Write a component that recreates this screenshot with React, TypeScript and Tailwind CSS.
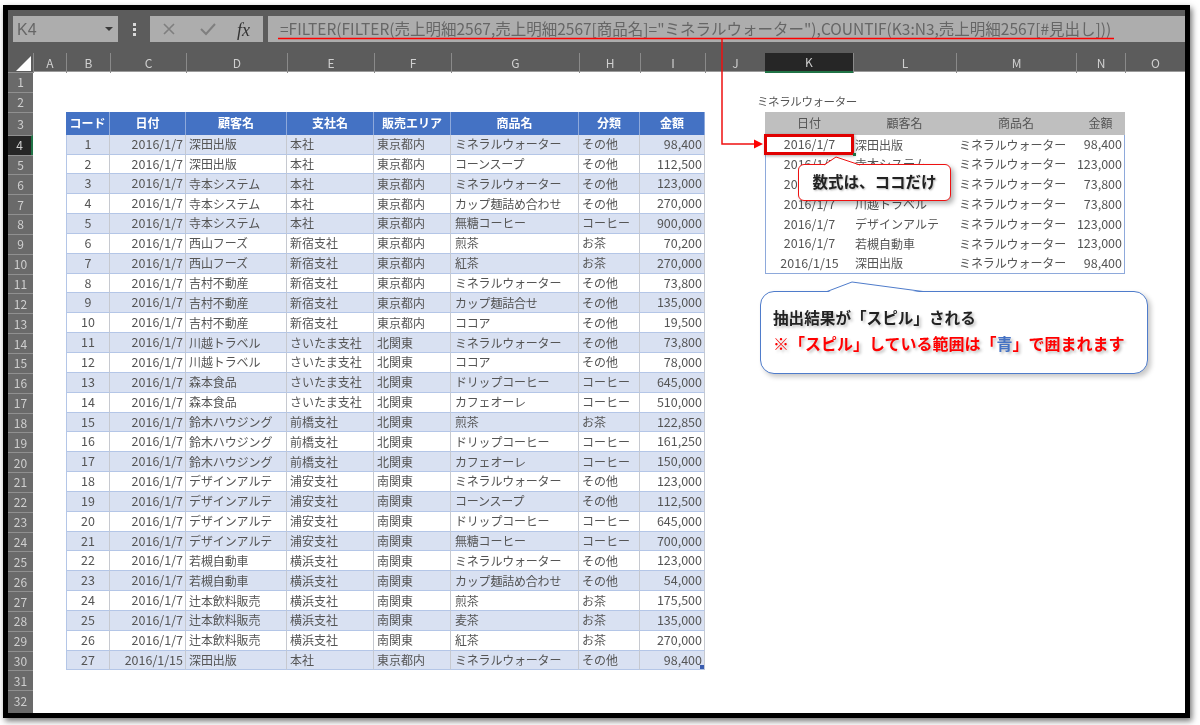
import React from "react";

const font = "[font-family:'Noto_Sans_CJK_JP','Liberation_Sans',sans-serif]";
const gridCols = "grid grid-cols-[33px_44px_76px_101px_87px_77px_128px_61px_65px_60px_88px_103px_120px_49px_60px]";

const data: string[][] = [
  ["1","2016/1/7","深田出版","本社","東京都内","ミネラルウォーター","その他","98,400"],
  ["2","2016/1/7","深田出版","本社","東京都内","コーンスープ","その他","112,500"],
  ["3","2016/1/7","寺本システム","本社","東京都内","ミネラルウォーター","その他","123,000"],
  ["4","2016/1/7","寺本システム","本社","東京都内","カップ麺詰め合わせ","その他","270,000"],
  ["5","2016/1/7","寺本システム","本社","東京都内","無糖コーヒー","コーヒー","900,000"],
  ["6","2016/1/7","西山フーズ","新宿支社","東京都内","煎茶","お茶","70,200"],
  ["7","2016/1/7","西山フーズ","新宿支社","東京都内","紅茶","お茶","270,000"],
  ["8","2016/1/7","吉村不動産","新宿支社","東京都内","ミネラルウォーター","その他","73,800"],
  ["9","2016/1/7","吉村不動産","新宿支社","東京都内","カップ麺詰合せ","その他","135,000"],
  ["10","2016/1/7","吉村不動産","新宿支社","東京都内","ココア","その他","19,500"],
  ["11","2016/1/7","川越トラベル","さいたま支社","北関東","ミネラルウォーター","その他","73,800"],
  ["12","2016/1/7","川越トラベル","さいたま支社","北関東","ココア","その他","78,000"],
  ["13","2016/1/7","森本食品","さいたま支社","北関東","ドリップコーヒー","コーヒー","645,000"],
  ["14","2016/1/7","森本食品","さいたま支社","北関東","カフェオーレ","コーヒー","510,000"],
  ["15","2016/1/7","鈴木ハウジング","前橋支社","北関東","煎茶","お茶","122,850"],
  ["16","2016/1/7","鈴木ハウジング","前橋支社","北関東","ドリップコーヒー","コーヒー","161,250"],
  ["17","2016/1/7","鈴木ハウジング","前橋支社","北関東","カフェオーレ","コーヒー","150,000"],
  ["18","2016/1/7","デザインアルテ","浦安支社","南関東","ミネラルウォーター","その他","123,000"],
  ["19","2016/1/7","デザインアルテ","浦安支社","南関東","コーンスープ","その他","112,500"],
  ["20","2016/1/7","デザインアルテ","浦安支社","南関東","ドリップコーヒー","コーヒー","645,000"],
  ["21","2016/1/7","デザインアルテ","浦安支社","南関東","無糖コーヒー","コーヒー","700,000"],
  ["22","2016/1/7","若槻自動車","横浜支社","南関東","ミネラルウォーター","その他","123,000"],
  ["23","2016/1/7","若槻自動車","横浜支社","南関東","カップ麺詰め合わせ","その他","54,000"],
  ["24","2016/1/7","辻本飲料販売","横浜支社","南関東","煎茶","お茶","175,500"],
  ["25","2016/1/7","辻本飲料販売","横浜支社","南関東","麦茶","お茶","135,000"],
  ["26","2016/1/7","辻本飲料販売","横浜支社","南関東","紅茶","お茶","270,000"],
  ["27","2016/1/15","深田出版","本社","東京都内","ミネラルウォーター","その他","98,400"],
];

const spill: string[][] = [
  ["2016/1/7","深田出版","ミネラルウォーター","98,400"],
  ["2016/1/7","寺本システム","ミネラルウォーター","123,000"],
  ["2016/1/7","吉村不動産","ミネラルウォーター","73,800"],
  ["2016/1/7","川越トラベル","ミネラルウォーター","73,800"],
  ["2016/1/7","デザインアルテ","ミネラルウォーター","123,000"],
  ["2016/1/7","若槻自動車","ミネラルウォーター","123,000"],
  ["2016/1/15","深田出版","ミネラルウォーター","98,400"],
];

const colLetters = ["A","B","C","D","E","F","G","H","I","J","K","L","M","N","O"];
const headers = ["コード","日付","顧客名","支社名","販売エリア","商品名","分類","金額"];
const rowH = "h-[19.85px]";

function BodyRow({ row, i }: { row: string[]; i: number }) {
  const bg = i % 2 === 0 ? "bg-[#d9e1f2]" : "bg-white";
  const base = `${bg} border-b border-b-[#b4c6e7] border-r border-r-[#c6c9d0] flex items-center overflow-hidden whitespace-nowrap`;
  const s = spill[i];
  const last = i === data.length - 1;
  const endRow = i === 6 ? "border-b border-b-[#8ea9db]" : "";
  return (
    <div className={`${gridCols} ${rowH}`}>
      <div />
      <div className={`${base} justify-center border-l border-l-[#b4c6e7] text-[12.5px]`}>{row[0]}</div>
      <div className={`${base} justify-end pr-[2px] text-[12.5px]`}>{row[1]}</div>
      <div className={`${base} pl-[3px] tracking-[-0.1px]`}>{row[2]}</div>
      <div className={`${base} pl-[3px]`}>{row[3]}</div>
      <div className={`${base} pl-[3px]`}>{row[4]}</div>
      <div className={`${base} pl-[4px] tracking-[-0.2px]`}>{row[5]}</div>
      <div className={`${base} pl-[3px]`}>{row[6]}</div>
      <div className={`${base} relative justify-end pr-[2px] border-r-[#b4c6e7] text-[12.5px]`}>
        {row[7]}
        {last && <span className="absolute right-0 bottom-0 w-[4px] h-[4px] bg-[#3a5db0]" />}
      </div>
      <div />
      {s ? (
        <>
          <div className={`flex items-center justify-center text-[12.5px] border-l border-l-[#8ea9db] ${endRow}`}>{s[0]}</div>
          <div className={`flex items-center pl-[2px] ${endRow}`}>{s[1]}</div>
          <div className={`flex items-center pl-[3px] whitespace-nowrap tracking-[-0.1px] ${endRow}`}>{s[2]}</div>
          <div className={`flex items-center justify-end pr-[2px] text-[12.5px] border-r border-r-[#8ea9db] ${endRow}`}>{s[3]}</div>
        </>
      ) : (
        <>
          <div /><div /><div /><div />
        </>
      )}
    </div>
  );
}

export default function App() {
  const rowNums = Array.from({ length: 32 }, (_, n) => n + 1);
  return (
    <div className={`relative w-[1200px] h-[725px] bg-white overflow-hidden blur-[0.35px] ${font}`}>
      <div className="mt-[5px] ml-[3px] w-[1187px] h-[713px] border-[5px] border-black shadow-[2px_3px_6px_rgba(0,0,0,0.55)] flex flex-col overflow-hidden bg-white text-[12px] text-[#555555]">
        {/* Formula bar */}
        <div className="h-[43px] shrink-0 bg-[#5c5c5c] pt-[6px] flex items-start">
          <div className="ml-[5px] w-[105px] h-[26px] bg-[#adadad] flex items-center justify-between pl-[4px] pr-[5px] text-[16px] text-[#666666] [font-family:'Liberation_Sans',sans-serif]">
            <span className="pt-[2px]">K4</span>
            <span className="w-0 h-0 border-l-[4px] border-r-[4px] border-t-[4px] border-l-transparent border-r-transparent border-t-[#3a3a3a]" />
          </div>
          <div className="w-[32px] h-[26px] flex flex-col items-center justify-center gap-[2px]">
            <span className="w-[3px] h-[3px] bg-[#d8d8d8]" />
            <span className="w-[3px] h-[3px] bg-[#d8d8d8]" />
            <span className="w-[3px] h-[3px] bg-[#d8d8d8]" />
          </div>
          <div className="relative w-[113px] h-[26px] bg-[#adadad] flex items-center">
            <svg width="113" height="26" viewBox="0 0 113 26" fill="none">
              <path d="M14 8 L24 18 M24 8 L14 18" stroke="#7f7f7f" strokeWidth="1.6" />
              <path d="M51 13 L56 18 L65 8" stroke="#7f7f7f" strokeWidth="2" />
            </svg>
            <span className="absolute left-[87px] top-[1px] text-[18px] italic text-[#333333] [font-family:'Liberation_Serif',serif]">fx</span>
          </div>
          <div className="ml-[5px] flex-1 h-[26px] bg-[#adadad] pl-[12px] flex items-center text-[15.5px] text-[#666666] whitespace-nowrap overflow-hidden">
            =FILTER(FILTER(売上明細2567,売上明細2567[商品名]="ミネラルウォーター"),COUNTIF(K3:N3,売上明細2567[#見出し]))
          </div>
        </div>

        {/* Sheet */}
        <div className="flex-1 min-h-0 flex overflow-hidden">
          {/* Row heads */}
          <div className="w-[25px] shrink-0 flex flex-col bg-[#6a6a6a] text-[#cfcfcf] overflow-hidden">
            <div className="h-[19px] shrink-0 bg-[#5c5c5c] flex items-end justify-end pr-[2px] pb-[1px]">
              <span className="w-0 h-0 border-b-[15px] border-l-[15px] border-b-white border-l-transparent" />
            </div>
            {rowNums.map((n) => (
              <div
                key={n}
                className={`shrink-0 flex items-center justify-center text-[12px] border-t border-t-[#909090] ${n === 3 ? "h-[23px]" : rowH} ${n === 4 ? "bg-[#262626] border-r-2 border-r-[#217346]" : ""}`}
              >
                {n}
              </div>
            ))}
          </div>

          <div className="w-[1152px] flex flex-col overflow-hidden">
            {/* Col heads */}
            <div className={`${gridCols} h-[19px] shrink-0 bg-[#5c5c5c] text-[#cfcfcf] border-b border-b-[#9a9a9a]`}>
              {colLetters.map((c) => (
                <div
                  key={c}
                  className={`flex items-center justify-center text-[12px] ${c === "K" ? "bg-[#262626] border-b-2 border-b-[#217346]" : "border-l border-l-[#8a8a8a]"}`}
                >
                  {c}
                </div>
              ))}
            </div>

            {/* Rows 1, 2 */}
            <div className={`${gridCols} ${rowH} shrink-0`} />
            <div className={`${gridCols} ${rowH} shrink-0`}>
              <div className="col-start-10 relative">
                <span className="absolute left-[52px] top-[1px] whitespace-nowrap tracking-[-0.4px] text-[11.5px]">ミネラルウォーター</span>
              </div>
            </div>

            {/* Row 3 */}
            <div className={`${gridCols} h-[23px] shrink-0`}>
              <div />
              {headers.map((h) => (
                <div key={h} className="bg-[#4472c4] border-r border-r-[#8ea9db] flex items-center justify-center text-white font-bold text-[12px] whitespace-nowrap">
                  {h}
                </div>
              ))}
              <div />
              <div className="bg-[#bfbfbf] flex items-center justify-center">日付</div>
              <div className="bg-[#bfbfbf] flex items-center justify-center">顧客名</div>
              <div className="bg-[#bfbfbf] flex items-center justify-center">商品名</div>
              <div className="bg-[#bfbfbf] flex items-center justify-center">金額</div>
            </div>

            {data.map((row, i) => (
              <BodyRow key={row[0]} row={row} i={i} />
            ))}
            <div className={`${rowH} shrink-0`} />
            <div className={`${rowH} shrink-0`} />
          </div>
        </div>
      </div>

      {/* Annotation lines */}
      <svg className="absolute left-0 top-0 pointer-events-none" width="1200" height="725" viewBox="0 0 1200 725" fill="none">
        <path d="M278 38.5 H1114" stroke="#ff0000" strokeWidth="1.5" />
        <path d="M722 38.5 V144 H755" stroke="#f01010" strokeWidth="1.5" />
        <path d="M754 139.5 L763 144 L754 148.5 Z" fill="#ff0000" />
      </svg>

      {/* K4 selection */}
      <div className="absolute left-[764px] top-[134px] w-[90px] h-[21px] border-[3px] border-[#e00000] shadow-[1px_1px_3px_rgba(0,0,0,0.35)]" />
      <div className="absolute left-[853px] top-[153px] w-[3px] h-[3px] bg-[#217346]" />

      {/* Red callout */}
      <div className="absolute left-[798px] top-[164px] w-[153px] h-[37px] bg-white border border-[#ee1111] rounded-[6px] shadow-[3px_3px_5px_rgba(0,0,0,0.3)] flex items-center justify-center pb-[2px] text-[15.5px] font-bold text-[#222222] [text-shadow:1px_1px_2px_rgba(0,0,0,0.3)]">
        数式は、ココだけ
        <svg className="absolute left-[24px] top-[-9px]" width="38" height="10" viewBox="0 0 38 10" fill="none">
          <path d="M1 9.5 L13 1 L37 9.5 Z" fill="#ffffff" />
          <path d="M1 9 L13 1 L37 9" stroke="#ee1111" strokeWidth="1" />
        </svg>
      </div>

      {/* Blue callout */}
      <div className="absolute left-[760px] top-[291px] w-[388px] h-[83px] bg-white border border-[#4f7ccb] rounded-[14px] shadow-[3px_3px_5px_rgba(0,0,0,0.22)] pl-[12px] pt-[15px] flex flex-col gap-[6px] font-bold text-[15.6px] [text-shadow:2px_2px_3px_rgba(0,0,0,0.25)]">
        <div className="h-[20px] leading-[20px] text-[#222222]">抽出結果が「スピル」される</div>
        <div className="h-[20px] leading-[20px] text-[16px] text-[#ff0000] whitespace-nowrap">
          ※「スピル」している範囲は「<span className="text-[#4472c4]">青</span>」で囲まれます
        </div>
        <svg className="absolute left-[65px] top-[-11px]" width="98" height="12" viewBox="0 0 98 12" fill="none">
          <path d="M1 11.5 L26 1 L97 11.5 Z" fill="#ffffff" />
          <path d="M1 10.5 L26 1 L97 10.5" stroke="#4f7ccb" strokeWidth="1" />
        </svg>
      </div>
    </div>
  );
}
